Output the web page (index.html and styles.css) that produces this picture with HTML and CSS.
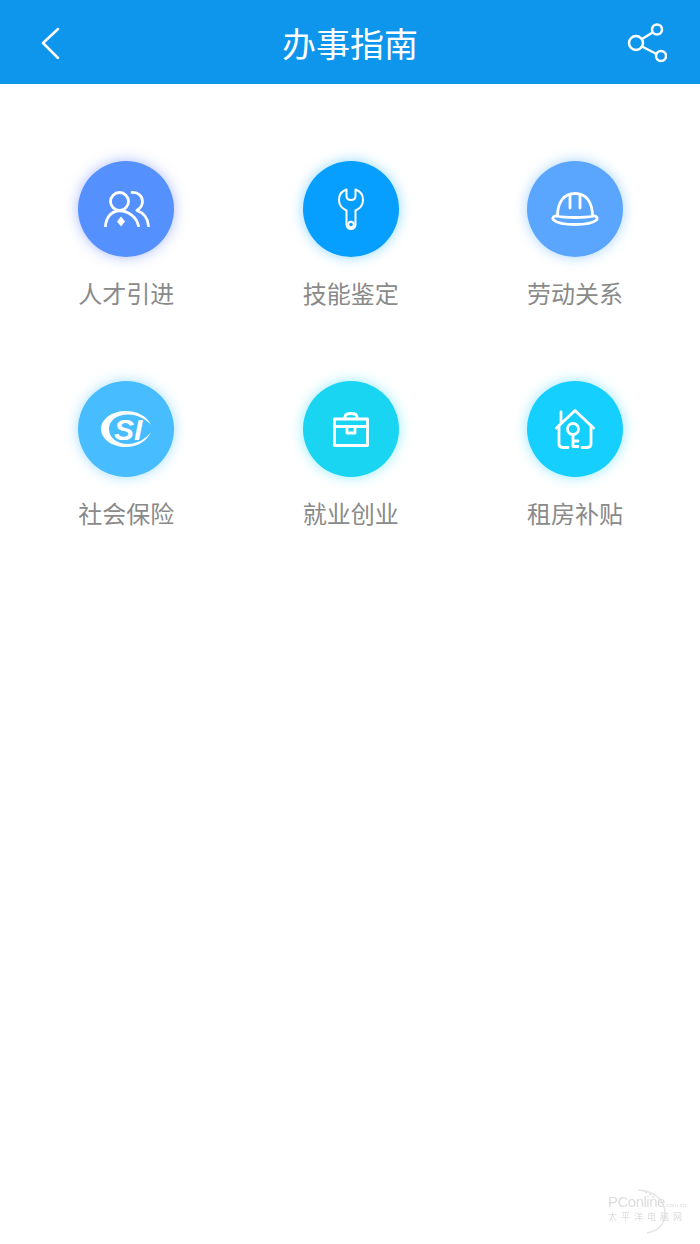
FILE: index.html
```html
<!DOCTYPE html>
<html lang="zh-CN">
<head>
    <meta charset="UTF-8">
    <title>办事指南</title>
    <link rel="stylesheet" href="styles.css">
</head>
<body>
    <header class="topbar">
        <svg class="back" width="20" height="32" viewBox="0 0 20 32">
            <path d="M18 2 L3 16 L18 31"/>
        </svg>
        <h1>办事指南</h1>
        <svg class="share" width="40" height="40" viewBox="0 0 40 40">
            <circle cx="30" cy="6.500" r="5"/>
            <circle cx="9" cy="20" r="7"/>
            <circle cx="34" cy="33" r="5"/>
            <path d="M15 16 L25.500 9.500 M15 23.500 L29.500 31"/>
        </svg>
    </header>

    <main class="guide">
        <a class="item">
            <span class="dot dot-talent">
                <svg width="48" height="36" viewBox="-2 0 48 36">
                    <circle cx="15.500" cy="10.500" r="9"/>
                    <path d="M1.500 35 C2 26 8 20 15.500 19.500 C24 20 33 26 34.500 35"/>
                    <path d="M28 1.500 C34 1 38.500 5 38.500 10.500 C38.500 14.500 36 17.500 33 19.500 C40 22 44 28 44.500 35"/>
                    <path class="solid" d="M17 25.500 L21 30.500 L17 35.500 L13 30.500 Z"/>
                </svg>
            </span>
            <span class="label">人才引进</span>
        </a>
        <a class="item">
            <span class="dot dot-skill">
                <svg class="thin" width="26" height="42" viewBox="0 0 26 42">
                    <path d="M8.500 1.500 V8 C8.500 11 10 12 13 12 C16 12 17.500 11 17.500 8 V1.500 C22 3 25 7 25 12 C25 17 22 20.500 17.500 22.500 V36.500 C17.500 39 15.500 41 13 41 C10.500 41 8.500 39 8.500 36.500 V22.500 C4 20.500 1 17 1 12 C1 7 4 3 8.500 1.500 Z"/>
                    <circle cx="13" cy="36.500" r="2.800"/>
                </svg>
            </span>
            <span class="label">技能鉴定</span>
        </a>
        <a class="item">
            <span class="dot dot-labor">
                <svg width="48" height="34" viewBox="0 0 48 34">
                    <path d="M6.500 24 C6.500 10 13 1.500 24 1.500 C35 1.500 41.500 10 41.500 24"/>
                    <path d="M19 3 V16 M29 3 V16"/>
                    <path d="M6 24 C14 26 34 26 42 24 C45.500 23.500 47 26 45.500 28 C42 31 34 32.500 24 32.500 C14 32.500 6 31 2.500 28 C1 26 2.500 23.500 6 24 Z"/>
                </svg>
            </span>
            <span class="label">劳动关系</span>
        </a>
        <a class="item">
            <span class="dot dot-social">
                <svg width="50" height="36" viewBox="0 0 50 36">
                    <path class="solid" d="M50 14 C46 5 36 0 25 0 C11 0 0 8 0 18 C0 28 11 36 25 36 C36 36 46 30 50 21 C45 28 36 33 27 33 C15 33 8 26 8 18 C8 10 15 3.500 27 3.500 C36 3.500 45 8 50 14 Z"/>
                    <text class="mark" x="13" y="29">SI</text>
                </svg>
            </span>
            <span class="label">社会保险</span>
        </a>
        <a class="item">
            <span class="dot dot-job">
                <svg width="36" height="35" viewBox="0 0 36 35">
                    <path d="M1.500 7 H34.500 V33.500 H1.500 Z"/>
                    <path d="M1.500 14.500 H34.500"/>
                    <path d="M14 14.500 V21 H22 V14.500"/>
                    <path d="M12 7 V5 C12 2.500 14 1.500 18 1.500 C22 1.500 24 2.500 24 5 V7"/>
                </svg>
            </span>
            <span class="label">就业创业</span>
        </a>
        <a class="item">
            <span class="dot dot-rent">
                <svg width="40" height="40" viewBox="0 0 40 40">
                    <path d="M1.500 19 L20 1.500 L38.500 19"/>
                    <path d="M6 13.500 V3"/>
                    <path d="M4 17 V35 C4 37.500 5.500 38.500 8 38.500 H13"/>
                    <path d="M36 17 V35 C36 37.500 34.500 38.500 32 38.500 H27"/>
                    <circle cx="18" cy="20" r="5.500"/>
                    <path d="M18 25.500 V37.500 H23 M18 32 H23"/>
                </svg>
            </span>
            <span class="label">租房补贴</span>
        </a>
    </main>

    <footer class="watermark">
        <svg class="arc" width="78" height="50" viewBox="0 0 78 50">
            <path d="M30 4 C46 5 57 14 57 27 C57 38 50 45 39 47"/>
            <path d="M37 6 L39 7 M41 8 L43 9 M44 10 L46 12"/>
        </svg>
        <span class="brand">PConline</span>
        <span class="brand-tld">.com.cn</span>
        <span class="brand-cn">太平洋电脑网</span>
    </footer>
</body>
</html>
```

FILE: styles.css
```css
html, body { margin: 0; padding: 0; }
body { position: relative; width: 700px; height: 1244px; background: #fff; overflow: hidden; font-family: "Noto Sans CJK SC", "Liberation Sans", sans-serif; }

.topbar { display: grid; grid-template-columns: 1fr auto 1fr; align-items: center; box-sizing: border-box; height: 84px; padding: 2px 33px 0; background: #0e95ec; color: #fff; }
.topbar h1 { margin: 0; font-size: 34px; font-weight: 400; line-height: 60px; }
.topbar svg { fill: none; stroke: #fff; stroke-width: 2.500; stroke-linecap: round; stroke-linejoin: round; }
.back { margin-left: 7px; }
.share { justify-self: end; }

.guide { display: grid; grid-template-columns: repeat(3, 1fr); grid-auto-rows: 220px; padding: 77px 12.800px 0 14.200px; }
.item { display: flex; flex-direction: column; align-items: center; }
.dot { display: flex; align-items: center; justify-content: center; width: 96px; height: 96px; border-radius: 50%; }
.dot svg { fill: none; stroke: #fff; stroke-width: 2.800; stroke-linecap: round; stroke-linejoin: round; }
.dot svg.thin { stroke-width: 2; }
.dot svg .solid { fill: #fff; stroke: none; }
.dot svg .mark { fill: #fff; stroke: none; font-family: "Liberation Sans", sans-serif; font-size: 30px; font-weight: bold; font-style: italic; }
.dot-talent { background: #5590ff; box-shadow: 0 0 13px rgba(85, 120, 255, 0.5); }
.dot-skill { background: #069fff; box-shadow: 0 0 13px rgba(6, 170, 255, 0.45); }
.dot-labor { background: #5aa6ff; box-shadow: 0 0 13px rgba(60, 160, 255, 0.45); }
.dot-social { background: #47bcff; box-shadow: 0 0 13px rgba(50, 185, 255, 0.45); }
.dot-job { background: #19d5f2; box-shadow: 0 0 13px rgba(20, 215, 245, 0.45); }
.dot-rent { background: #15cfff; box-shadow: 0 0 13px rgba(20, 205, 255, 0.45); }
.label { margin-top: 19px; font-size: 24px; line-height: 34px; color: #8a8a8a; }

.watermark { position: absolute; left: 608px; top: 1186px; width: 78px; height: 50px; color: #dcdcdc; filter: blur(0.4px); }
.arc { position: absolute; left: 0; top: 0; fill: none; stroke: #e4e4e4; stroke-width: 1.500; }
.brand { position: absolute; left: 0; top: 9px; font-family: "Liberation Sans", sans-serif; font-size: 15px; line-height: 14px; letter-spacing: -0.500px; }
.brand-tld { position: absolute; left: 57px; top: 15px; font-family: "Liberation Sans", sans-serif; font-size: 6px; line-height: 8px; }
.brand-cn { position: absolute; left: 0; top: 26px; font-size: 9px; line-height: 10px; letter-spacing: 4px; white-space: nowrap; }
```
